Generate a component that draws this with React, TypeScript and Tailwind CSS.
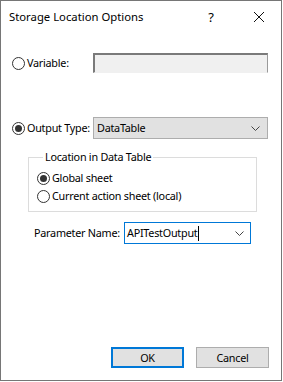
import React from "react";

function Radio({ checked }: { checked?: boolean }) {
  return (
    <span className="flex h-[13px] w-[13px] shrink-0 items-center justify-center rounded-full border border-[#333333] bg-white">
      {checked && <span className="h-[7px] w-[7px] rounded-full bg-[#333333]" />}
    </span>
  );
}

function Chevron() {
  return (
    <svg width="9" height="5" viewBox="0 0 9 5" className="shrink-0">
      <polyline points="0.5,0.5 4.5,4.5 8.5,0.5" fill="none" stroke="#444444" strokeWidth="1" />
    </svg>
  );
}

// Storage location dialog, Win10 look
export default function App() {
  return (
    <div
      className="h-[382px] w-[283px] whitespace-nowrap bg-white text-[10.8px] leading-[16px] tracking-[-0.25px] text-black"
      style={{ fontFamily: '"Noto Sans", "Liberation Sans", sans-serif' }}
    >
      <div className="flex h-[381px] w-[282px] flex-col border border-[#767676] bg-white">
        {/* title bar */}
        <div className="flex h-[31px] shrink-0 items-center pl-[8px] text-[11.3px] tracking-normal">
          <span>Storage Location Options</span>
          <span className="ml-auto mr-[40px] text-[13px]">?</span>
          <svg width="10" height="10" viewBox="0 0 10 10" className="mr-[17px] shrink-0">
            <line x1="0" y1="0" x2="10" y2="10" stroke="#111" strokeWidth="1" />
            <line x1="10" y1="0" x2="0" y2="10" stroke="#111" strokeWidth="1" />
          </svg>
        </div>

        {/* variable */}
        <div className="mt-[21px] flex h-[20px] items-center pl-[11px]">
          <Radio />
          <span className="ml-[2px] w-[66px]">Variable:</span>
          <div className="h-[20px] w-[175px] shrink-0 border-t-2 border-l-2 border-r border-b border-t-[#7a7a7a] border-l-[#7a7a7a] border-r-[#9a9a9a] border-b-[#f0f0f0] border-r-dotted bg-[#f0f0f0]" />
        </div>

        {/* output type */}
        <div className="mt-[44px] flex h-[22px] items-center pl-[11px]">
          <Radio checked />
          <span className="ml-[2px] w-[66px]">Output Type:</span>
          <div className="flex h-[22px] w-[175px] shrink-0 items-center border border-[#adadad] bg-[#e1e1e1] pl-[3px] pr-[7px]">
            <span>DataTable</span>
            <span className="ml-auto">
              <Chevron />
            </span>
          </div>
        </div>

        {/* group box */}
        <fieldset className="mt-[10px] ml-[27px] w-[229px] border border-[#dcdcdc] pb-[6px] pl-[8px] pt-[4px]">
          <legend className="ml-[6px] px-[2px]">Location in Data Table</legend>
          <div className="flex h-[18px] items-center">
            <Radio checked />
            <span className="ml-[2px]">Global sheet</span>
          </div>
          <div className="flex h-[18px] items-center">
            <Radio />
            <span className="ml-[2px]">Current action sheet (local)</span>
          </div>
        </fieldset>

        {/* parameter name */}
        <div className="mt-[10px] flex h-[22px] items-center pl-[33px]">
          <span className="w-[90px]">Parameter Name:</span>
          <div className="flex h-[22px] w-[127px] shrink-0 items-center border border-[#0078d7] bg-white pl-[2px] pr-[6px]">
            <span>APITestOutput</span>
            <span className="ml-[1px] h-[15px] w-px bg-black" />
            <span className="ml-auto">
              <Chevron />
            </span>
          </div>
        </div>

        {/* buttons */}
        <div className="mt-auto mb-[12px] flex justify-end gap-[12px] pr-[12px]">
          <button className="h-[21px] w-[73px] border-2 border-[#0078d7] bg-[#e1e1e1]">OK</button>
          <button className="h-[21px] w-[73px] border border-[#adadad] bg-[#e1e1e1]">Cancel</button>
        </div>
      </div>
    </div>
  );
}
